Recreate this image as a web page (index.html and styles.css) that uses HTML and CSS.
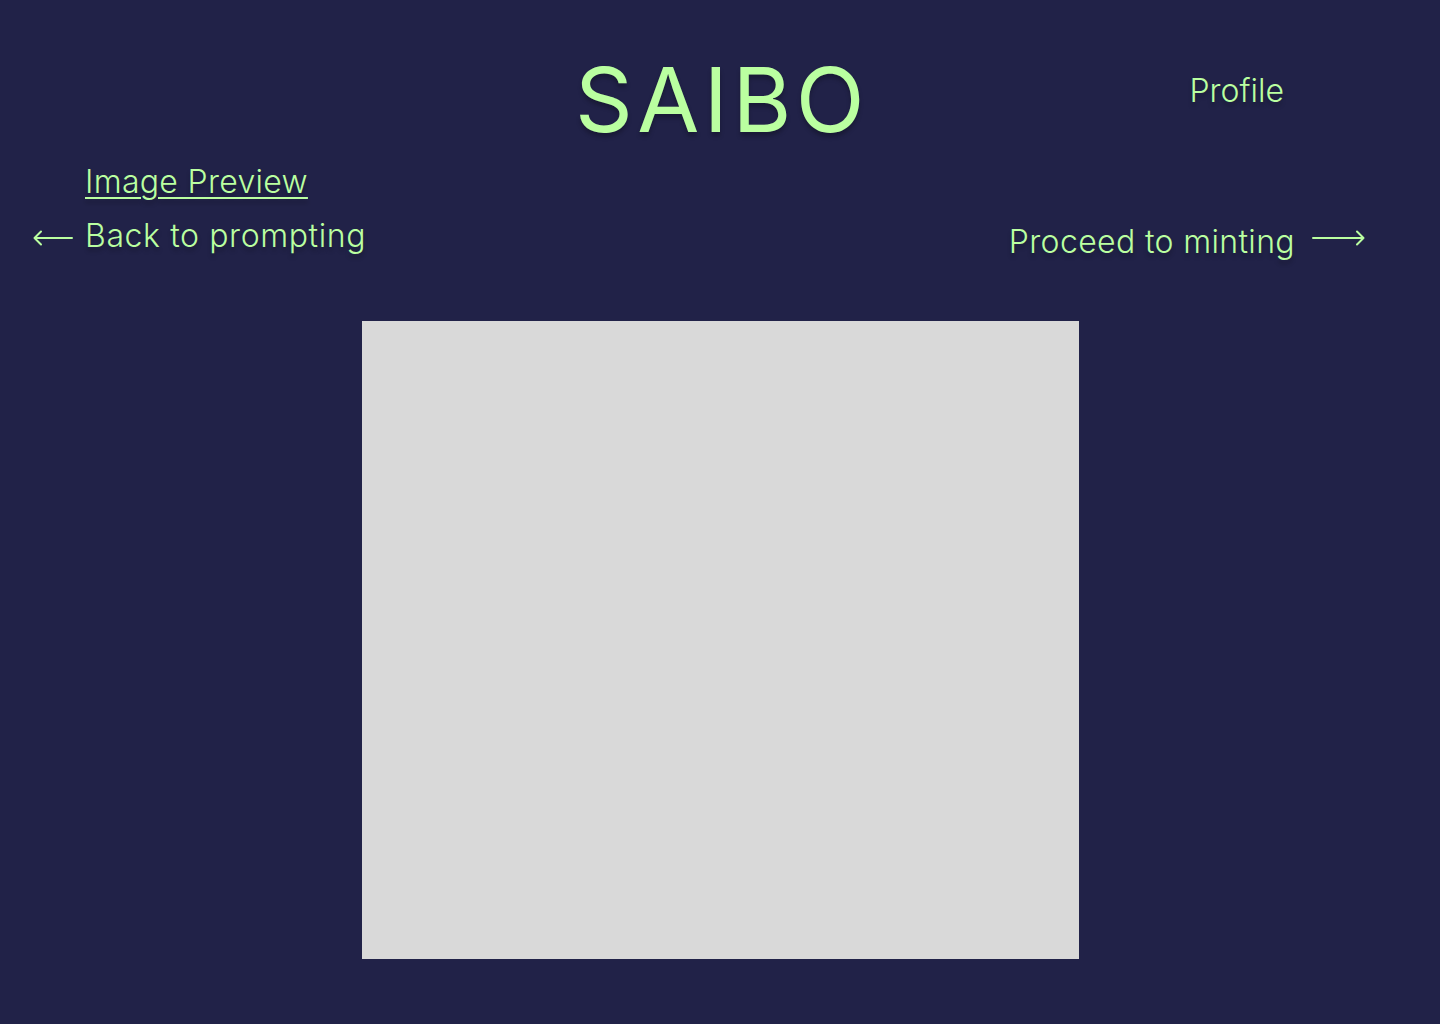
FILE: index.html
```html
<!DOCTYPE html>
<html lang="en">
<head>
<meta charset="utf-8">
<title>SAIBO – Image Preview</title>
<link rel="stylesheet" href="styles.css">
</head>
<body>
<header class="top">
  <div class="top-side"></div>
  <h1 class="logo">SAIBO</h1>
  <div class="top-side top-right"><a class="profile" href="#">Profile</a></div>
</header>
<main class="page">
  <h2 class="section-title"><a href="#">Image Preview</a></h2>
  <nav class="steps">
    <a class="step step-back" href="#">
      <svg class="arrow" width="40" height="16" viewBox="0 0 40 16" aria-hidden="true"><path d="M39 8H1.5M8 1.5L1.5 8 8 14.5" fill="none" stroke="currentColor" stroke-width="2" stroke-linecap="round" stroke-linejoin="round"/></svg>
      <span>Back to prompting</span>
    </a>
    <a class="step step-next" href="#">
      <span>Proceed to minting</span>
      <svg class="arrow" width="53" height="16" viewBox="0 0 53 16" aria-hidden="true"><path d="M1 8h50.5M45 1.5L51.5 8 45 14.5" fill="none" stroke="currentColor" stroke-width="2" stroke-linecap="round" stroke-linejoin="round"/></svg>
    </a>
  </nav>
  <div class="preview"></div>
</main>
</body>
</html>
```

FILE: styles.css
```css
* { box-sizing: border-box; }
html, body { margin: 0; padding: 0; }
body {
  background: #212248;
  color: #baffa0;
  font-family: Inter, "Open Sans", sans-serif;
  font-weight: 300;
  width: 1440px;
  min-height: 1024px;
}
a { color: inherit; text-decoration: none; }
.top {
  display: grid;
  grid-template-columns: 1fr auto 1fr;
  align-items: start;
  padding-top: 50px;
}
.logo {
  margin: 0 -4px 0 0;
  font-size: 90px;
  font-weight: 400;
  letter-spacing: 4.5px;
  line-height: 1.1;
  text-shadow: 0 4px 4px rgba(0,0,0,0.25);
}
.top-right {
  display: flex;
  justify-content: flex-end;
  padding-right: 156px;
  padding-top: 21px;
}
.profile, .section-title, .step {
  font-size: 32px;
  text-shadow: 0 4px 4px rgba(0,0,0,0.25);
}
.page { padding: 0 0 60px; }
.section-title {
  margin: 14px 0 0 85px;
  font-weight: 300;
  letter-spacing: 0.3px;
  line-height: 1.2;
}
.section-title a {
  text-decoration: underline;
  text-underline-offset: 4px;
  text-decoration-thickness: 2px;
}
.steps {
  display: flex;
  justify-content: space-between;
  align-items: center;
  padding: 14px 75px 0 33px;
}
.step { display: flex; align-items: center; }
.step-back { gap: 12px; letter-spacing: 0.6px; }
.step-back span { padding-bottom: 6px; }
.step-next { gap: 17px; letter-spacing: 0.35px; }
.step-next span { padding-top: 7px; }
.arrow { display: block; }
.preview {
  width: 717px;
  height: 638px;
  margin: 60px auto 0;
  background: #d9d9d9;
}
```
